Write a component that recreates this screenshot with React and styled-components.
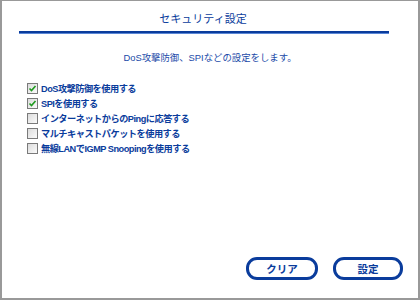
import React from "react";
import styled, { createGlobalStyle } from "styled-components";

const Global = createGlobalStyle`
  html, body { margin: 0; padding: 0; background: #fff; }
  body { font-family: "Liberation Sans", "Noto Sans CJK JP", sans-serif; }
`;

const Frame = styled.div`
  box-sizing: border-box;
  width: 420px;
  height: 300px;
  border: 2px solid #999;
  border-width: 1px 2px 2px 2px;
  display: flex;
  flex-direction: column;
  padding: 0 15px 18px 15px;
`;

const Head = styled.div`
  padding-right: 14px;
`;

const Title = styled.h1`
  margin: 0;
  padding-top: 10px;
  height: 20px;
  text-align: center;
  font-size: 11px;
  font-weight: normal;
  color: #0a3c9c;
  line-height: 16px;
`;

const Rule = styled.div`
  height: 1px;
  border-top: 2px solid #0a3c9c;
  background: #5a86d6;
  margin: 0 0 17px 2px;
`;

const Desc = styled.p`
  margin: 0 0 16px;
  text-align: center;
  font-size: 9.4px;
  color: #1a4aa8;
  line-height: 14px;
  padding-left: 14px;
`;

const List = styled.div`
  display: flex;
  flex-direction: column;
  gap: 1px;
  padding-left: 10px;
`;

const Row = styled.label`
  display: flex;
  align-items: center;
  gap: 2px;
  height: 14px;
  font-size: 9.2px;
  font-weight: bold;
  letter-spacing: -0.5px;
  color: #0a3c9c;
`;

const Box = styled.span`
  box-sizing: border-box;
  width: 11px;
  height: 11px;
  margin-right: 1px;
  border: 1px solid #7a7a7a;
  background: linear-gradient(135deg, #dcdcdc, #fafafa);
  display: flex;
  align-items: center;
  justify-content: center;
`;

const Spacer = styled.div`
  flex: 1;
`;

const Buttons = styled.div`
  display: flex;
  justify-content: flex-end;
  gap: 15px;
`;

const Button = styled.button`
  box-sizing: border-box;
  width: ${(p) => p.$w}px;
  height: 23px;
  border: 3px solid #0a3c9c;
  border-radius: 11px;
  background: #fff;
  color: #0a3c9c;
  font-family: inherit;
  font-weight: bold;
  font-size: 10.5px;
  padding: 0;
`;

const items = [
  ["DoS攻撃防御を使用する", true],
  ["SPIを使用する", true],
  ["インターネットからのPingに応答する", false],
  ["マルチキャストパケットを使用する", false],
  ["無線LANでIGMP Snoopingを使用する", false],
];

function Check({ on }) {
  return (
    <Box>
      {on && (
        <svg width="9" height="9" viewBox="0 0 9 9">
          <path d="M1.5 4.5 L3.5 6.5 L7.5 2" stroke="#1f9a1f" strokeWidth="1.6" fill="none" />
        </svg>
      )}
    </Box>
  );
}

export default function App() {
  return (
    <>
      <Global />
      <Frame>
        <Head>
          <Title>セキュリティ設定</Title>
          <Rule />
          <Desc>DoS攻撃防御、SPIなどの設定をします。</Desc>
        </Head>
        <List>
          {items.map(([t, on]) => (
            <Row key={t}>
              <Check on={on} />
              {t}
            </Row>
          ))}
        </List>
        <Spacer />
        <Buttons>
          <Button $w={72}>クリア</Button>
          <Button $w={70}>設定</Button>
        </Buttons>
      </Frame>
    </>
  );
}
